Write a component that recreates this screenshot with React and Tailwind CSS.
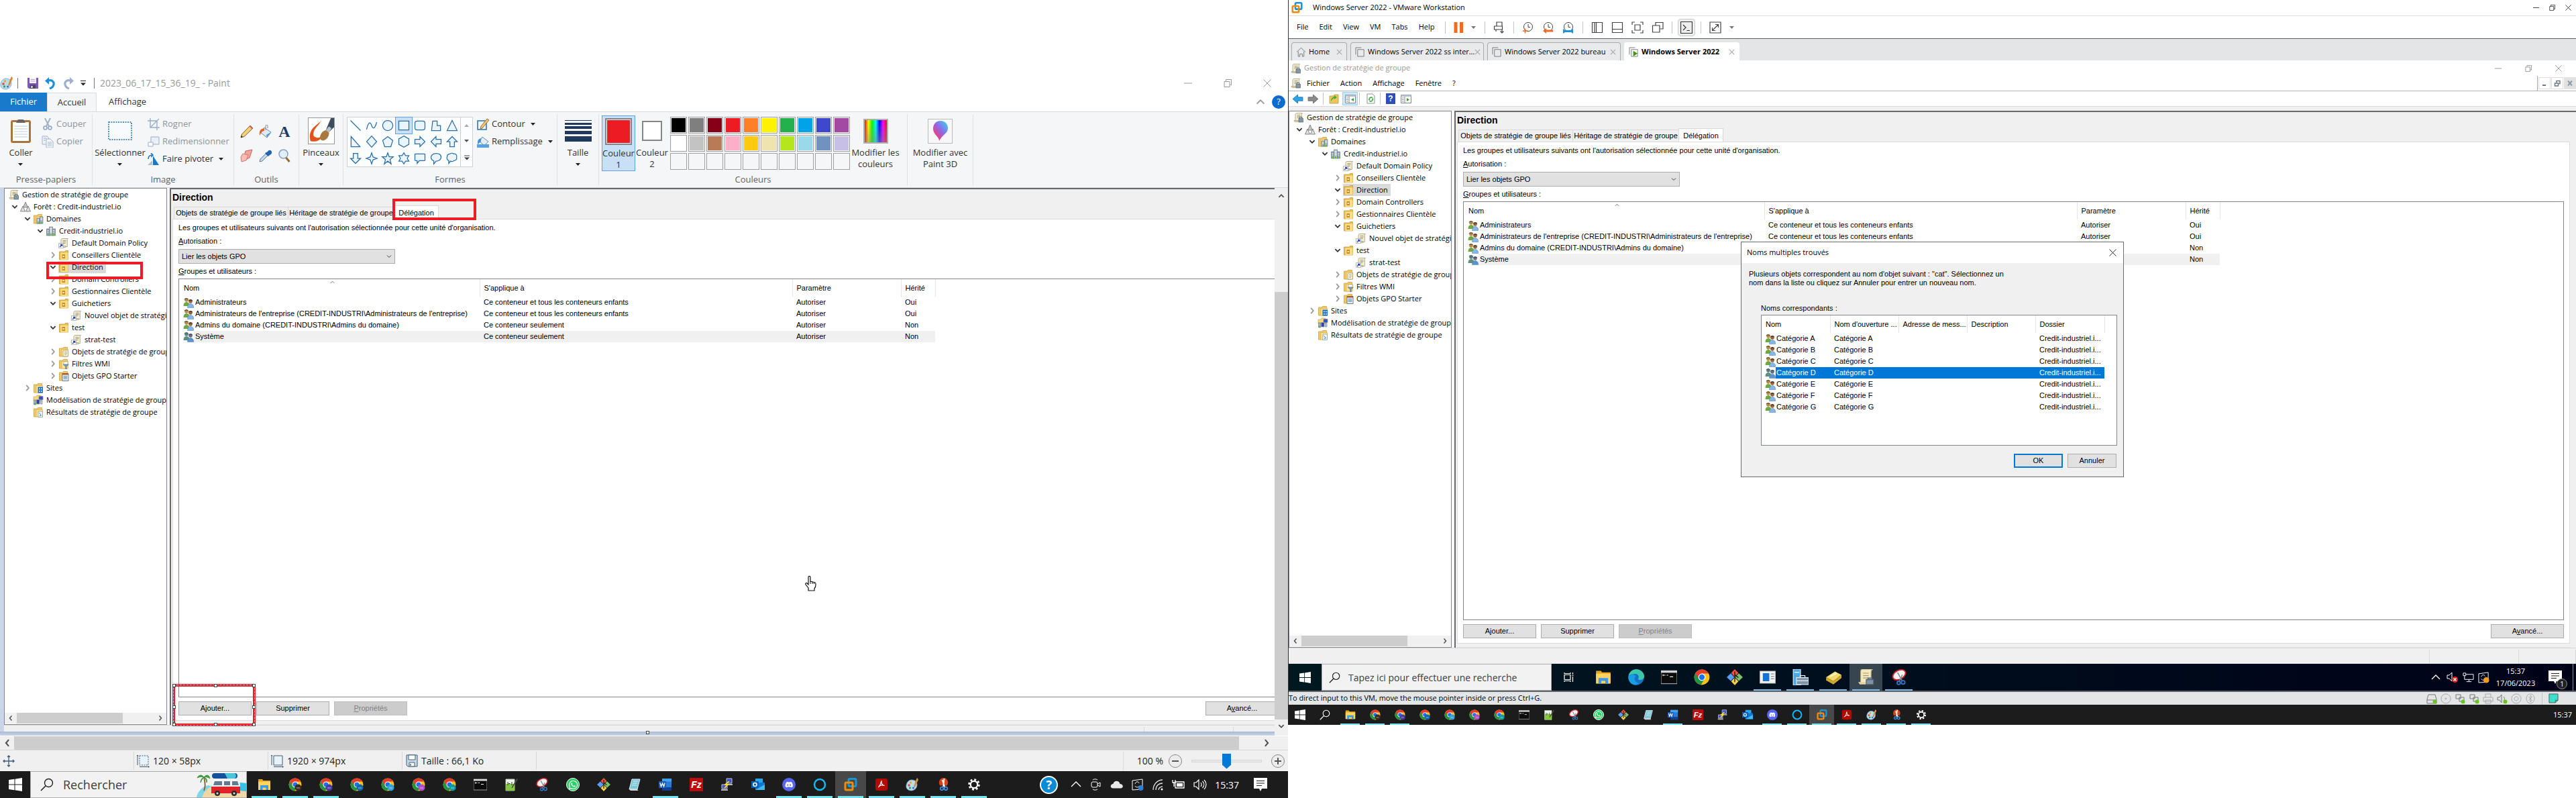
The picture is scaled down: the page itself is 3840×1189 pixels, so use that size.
import React from "react";
import { FaDiscord, FaWhatsapp } from "react-icons/fa";

/* ---------- small building blocks ---------- */

function Svg({ s = 16, w, h, vb = "0 0 16 16", className = "", children }) {
  return (
    <svg width={w || s} height={h || s} viewBox={vb} className={"shrink-0 " + className} aria-hidden="true" fill="none">
      {children}
    </svg>
  );
}

function Chevron({ dir = "down", s = 10, color = "#404040", sw = 1.5 }) {
  const d = { down: "M2 3.5l3 3 3-3", up: "M2 6.5l3-3 3 3", left: "M6.5 1.5L3.5 5l3 3.5", right: "M3.5 1.5L6.5 5l-3 3.5" }[dir];
  return (
    <Svg s={s} vb="0 0 10 10"><path d={d} stroke={color} strokeWidth={sw} /></Svg>
  );
}

function Caret({ color = "#222", up = false }) {
  return (
    <Svg w={8} h={4} vb="0 0 8 4"><path d={up ? "M0 4h7L3.500 0z" : "M0 0h7L3.500 4z"} fill={color} /></Svg>
  );
}

function WinButtons({ color, cell, s = 12 }) {
  return (
    <div className="flex items-center">
      <button aria-label="Réduire" className={"flex justify-center " + cell}><Svg s={s} vb="0 0 12 12"><path d="M0 6h12" stroke={color} /></Svg></button>
      <button aria-label="Restaurer" className={"flex justify-center " + cell}><Svg s={s} vb="0 0 12 12"><path d="M1 3.500h8v8H1zM3.500 3V.5h8v8H9.500" stroke={color} /></Svg></button>
      <button aria-label="Fermer" className={"flex justify-center " + cell}><Svg s={s} vb="0 0 12 12"><path d="M.5.5l11 11M11.500.5l-11 11" stroke={color} /></Svg></button>
    </div>
  );
}

/* ---------- console icons ---------- */

const Scroll = ({ x = 0 }) => (
  <g transform={`translate(${x} 0)`}>
    <path d="M5 1.500h8.500c-1 .6-1.200 1.300-1.200 2.500v9.500H3V4C3 2.500 3.600 1.500 5 1.500z" fill="#f5efd6" stroke="#a39a78" strokeWidth=".8" />
    <path d="M5.500 4.500h5M5.500 6.500h5M5.500 8.500h4" stroke="#8a8262" strokeWidth=".8" />
    <path d="M1 12.500h9v2H2.500C1.500 14.500 1 13.500 1 12.500z" fill="#e2d8ad" stroke="#a39a78" strokeWidth=".7" />
  </g>
);

const FolderBase = () => (
  <>
    <path d="M1.500 3h5l1-1.500h6V15h-12z" fill="#eec965" stroke="#c99a36" strokeWidth=".7" />
    <path d="M5 4.500h9.500V15H5z" fill="#fbe39b" stroke="#d6ab4a" strokeWidth=".6" />
  </>
);

function TreeIcon({ kind }) {
  return (
    <Svg s={16} className="mr-1">
      {kind === "root" && (<><Scroll /><path d="M8 9.500h6.500V15H8z" fill="#8596a6" stroke="#566878" strokeWidth=".7" /><path d="M9.500 9.500V7.500h3.500v2" stroke="#566878" /></>)}
      {kind === "forest" && (<><path d="M8 1l3.500 8h-7z" fill="#c6c6c6" stroke="#6e6e6e" strokeWidth=".8" /><path d="M4 7l3.500 8h-7zM12 7l3.500 8h-7z" fill="#dedede" stroke="#6e6e6e" strokeWidth=".8" /></>)}
      {kind === "domains" && (<><FolderBase /><path d="M6 7h4v8H6zM10.500 5H15v10h-4.500z" fill="#a9b8c4" stroke="#5c6c78" strokeWidth=".6" /><path d="M7 9h2M7 11h2M11.500 7h2.500M11.500 9h2.500" stroke="#fff" /><path d="M8 12.500h1.500V15H8zM12 12.500h1.500V15H12z" fill="#43c229" /></>)}
      {kind === "domain" && (<><path d="M1.500 5h4.500v10H1.500zM10 5h4.500v10H10z" fill="#98a8b4" stroke="#566672" strokeWidth=".6" /><path d="M5.500 2h5v13h-5z" fill="#bac7d1" stroke="#566672" strokeWidth=".6" /><path d="M2.500 7.500h2M2.500 10h2M11 7.500h2M11 10h2M6.500 4.500h3M6.500 7h3M6.500 9.500h3" stroke="#eef3f6" /><path d="M7 12h2v3H7zM2.500 13h1.500v2H2.500zM12 13h1.500v2H12z" fill="#43d020" /></>)}
      {kind === "link" && (<><Scroll x={1} /><path d="M.5 8.500h7v7h-7z" fill="#fff" stroke="#8e8e8e" strokeWidth=".6" /><path d="M2 14l3-3M3 10.500h2.700V13" stroke="#1c3fae" strokeWidth="1.300" /></>)}
      {kind === "ou" && (<><path d="M1.500 3h8l1-1.500h4V15h-13z" fill="#e8bd50" stroke="#c4912c" strokeWidth=".7" /><path d="M3.500 4.500h11V15h-11z" fill="#f8dc8a" /><path d="M5.500 7h4.500v6H5.500z" fill="#c68f24" /><path d="M6.500 9h2.500v2H6.500z" fill="#f6e6b4" /></>)}
      {kind === "gpos" && (<><FolderBase /><path d="M8 6h6.500v9H7V7z" fill="#f8f3df" stroke="#9b9272" strokeWidth=".7" /><path d="M9 8.500h4M9 10.500h4M9 12.500h3" stroke="#9b9272" strokeWidth=".7" /></>)}
      {kind === "wmi" && (<><FolderBase /><path d="M8 5h6v4H8z" fill="#fff" stroke="#999" strokeWidth=".6" /><path d="M7 9h8.500l-3.200 3.200V16h-1.600v-3.800z" fill="#7f9ab0" stroke="#516b80" strokeWidth=".5" /></>)}
      {kind === "starter" && (<><FolderBase /><path d="M6 4.500h9V15.500H6z" fill="#f4f8fc" stroke="#5d6a76" strokeWidth=".9" /><path d="M6 4h9v2.500H6z" fill="#a35a3c" /><path d="M7.500 8.500h6M7.500 10.500h6M7.500 12.500h6" stroke="#4a83c0" /></>)}
      {kind === "sites" && (<><FolderBase /><path d="M7.500 6.500H15V15.500H7.500z" fill="#1c6fc9" /><path d="M9 8.500h1.800v1.800H9zM12 8.500h1.800v1.800H12zM9 12h1.800v1.800H9zM12 12h1.800v1.800H12z" fill="#d9ecff" /></>)}
      {kind === "model" && (<><path d="M1 3h4l1-2h6v8H1z" fill="#f2d883" stroke="#c99a36" strokeWidth=".6" /><path d="M9 2.500h6v5H9z" fill="#3151c4" stroke="#888" strokeWidth=".8" /><path d="M1.500 8h3v7h-3z" fill="#a6b4be" stroke="#5c6c78" strokeWidth=".6" /><path d="M5.500 7.500h4.500V14H5.500z" fill="#2445b8" stroke="#999" strokeWidth=".8" /><path d="M11.500 8.500H14V14h-2.500z" fill="#c0cad2" stroke="#68757f" strokeWidth=".6" /><path d="M2 12.500h2v2H2z" fill="#43c229" /></>)}
      {kind === "results" && (<><FolderBase /><path d="M8 7h6.500v8.500H8z" fill="#f5fafd" stroke="#7d94a5" strokeWidth=".7" /><path d="M9.500 9l2 2.500-1 2 2.500-1" stroke="#2b85c9" /></>)}
    </Svg>
  );
}

function Users({ dim = false }) {
  return (
    <Svg s={16}>
      <circle cx="5" cy="4" r="2.800" fill={dim ? "#5d7c84" : "#b98a4a"} />
      <path d="M1.500 3.500C2 .5 7.500.3 8 3.500 6.500 2 3.500 2 1.500 3.500z" fill={dim ? "#3d6470" : "#57431f"} />
      <path d="M.5 13c0-4 1.500-6 4.500-6s4.500 2 4.500 6z" fill={dim ? "#5c9180" : "#6da840"} />
      <circle cx="11" cy="6" r="2.800" fill={dim ? "#6a6f7c" : "#96623c"} />
      <path d="M8 5.500C8.500 2.500 14 2.500 14.200 5.800 12.500 4 10 4 8 5.500z" fill={dim ? "#2d4560" : "#2e2219"} />
      <path d="M6.500 15.500c0-4 1.500-6 4.500-6s4.700 2 4.700 6z" fill={dim ? "#5b93cf" : "#86b6e8"} stroke="#4c7dac" strokeWidth=".5" />
    </Svg>
  );
}

/* ---------- group policy console ---------- */

const TREE = [
  [0, "", "root", "Gestion de stratégie de groupe"],
  [0, "down", "forest", "Forêt : Credit-industriel.io"],
  [1, "down", "domains", "Domaines"],
  [2, "down", "domain", "Credit-industriel.io"],
  [3, "", "link", "Default Domain Policy"],
  [3, "right", "ou", "Conseillers Clientèle"],
  [3, "down", "ou", "Direction"],
  [3, "right", "ou", "Domain Controllers"],
  [3, "right", "ou", "Gestionnaires Clientèle"],
  [3, "down", "ou", "Guichetiers"],
  [4, "", "link", "Nouvel objet de stratégie"],
  [3, "down", "ou", "test"],
  [4, "", "link", "strat-test"],
  [3, "right", "gpos", "Objets de stratégie de groupe"],
  [3, "right", "wmi", "Filtres WMI"],
  [3, "right", "starter", "Objets GPO Starter"],
  [1, "right", "sites", "Sites"],
  [1, "", "model", "Modélisation de stratégie de groupe"],
  [1, "", "results", "Résultats de stratégie de groupe"],
];
const INDENT = ["pl-1.5", "pl-[25px]", "pl-11", "pl-[63px]", "pl-[82px]"];

function ConsoleTree() {
  return (
    <nav aria-label="Arborescence" className="flex w-[243px] shrink-0 flex-col overflow-hidden border border-[#828790] bg-white">
      <ul className="min-h-0 flex-1 overflow-hidden font-['Open_Sans',sans-serif] text-[11px] text-black">
        {TREE.map(([depth, state, icon, label]) => (
          <li key={label} className={"flex h-[18px] items-center whitespace-nowrap " + INDENT[depth]}>
            {icon !== "root" && (
              <span className="flex w-[17px] shrink-0 justify-center">
                {state && <Chevron dir={state} s={12} color={state === "down" ? "#303030" : "#9a9a9a"} />}
              </span>
            )}
            <span className={"flex items-center pr-1 " + (label === "Direction" ? "bg-[#d9d9d9]" : "")}>
              <TreeIcon kind={icon} />
              <span className="leading-[18px]">{label}</span>
            </span>
          </li>
        ))}
      </ul>
      <div className="mb-px flex h-4 shrink-0 items-center bg-[#f0f0f0]">
        <span className="flex w-[18px] justify-center"><Chevron dir="left" color="#505050" /></span>
        <span className="h-full w-[158px] bg-[#cdcdcd]" />
        <span className="ml-auto flex w-[18px] justify-center"><Chevron dir="right" color="#505050" /></span>
      </div>
    </nav>
  );
}

function PushButton({ children, disabled = false, primary = false, w = "w-[109px]" }) {
  return (
    <button
      disabled={disabled}
      className={
        "h-[21px] text-[11px] leading-none " + w +
        (disabled ? " border border-[#bfbfbf] bg-[#cccccc] text-[#838383]" : primary ? " border-2 border-[#0078d7] bg-[#e1e1e1] text-black" : " border border-[#adadad] bg-[#e1e1e1] text-black")
      }
    >
      {children}
    </button>
  );
}

const MEMBERS = [
  ["Administrateurs", "Ce conteneur et tous les conteneurs enfants", "Autoriser", "Oui"],
  ["Administrateurs de l'entreprise (CREDIT-INDUSTRI\\Administrateurs de l'entreprise)", "Ce conteneur et tous les conteneurs enfants", "Autoriser", "Oui"],
  ["Admins du domaine (CREDIT-INDUSTRI\\Admins du domaine)", "Ce conteneur seulement", "Autoriser", "Non"],
  ["Système", "Ce conteneur seulement", "Autoriser", "Non"],
];

function DetailsPane({ id }) {
  return (
    <section className="ml-1 flex min-w-0 flex-1 flex-col border-t-2 border-l-2 border-[#696969] bg-[#f0f0f0] pr-[9px] pl-[2px] font-['Liberation_Sans',sans-serif] text-[11px] text-black">
      <h2 className="h-6 text-[14px] leading-6 font-bold">Direction</h2>
      <div role="tablist" className="flex h-5 items-end pl-[2px]">
        <button role="tab" className="h-[18px] w-[171px] border border-b-0 border-[#d9d9d9] whitespace-nowrap">Objets de stratégie de groupe liés</button>
        <button role="tab" className="h-[18px] w-[157px] border border-x-0 border-b-0 border-[#d9d9d9] whitespace-nowrap">Héritage de stratégie de groupe</button>
        <button role="tab" aria-selected="true" className="-mb-px h-[21px] w-[67px] border border-b-0 border-[#d9d9d9] bg-white">Délégation</button>
      </div>
      <div className="flex min-h-0 flex-1 flex-col border border-[#dcdcdc] bg-white px-2 pt-[2px] pb-[7px]">
        <p className="h-5 leading-5">Les groupes et utilisateurs suivants ont l'autorisation sélectionnée pour cette unité d'organisation.</p>
        <label htmlFor={id} className="h-[22px] leading-5"><u>A</u>utorisation :</label>
        <div className="relative w-[323px]">
          <select id={id} className="block h-[22px] w-full appearance-none border border-[#adadad] bg-[#e1e1e1] px-1">
            <option>Lier les objets GPO</option>
          </select>
          <span className="pointer-events-none absolute top-1.5 right-1"><Chevron s={10} sw={1} /></span>
        </div>
        <p className="h-[22px] leading-[22px]"><u>G</u>roupes et utilisateurs :</p>
        <div className="min-h-0 flex-1 border border-[#828790]">
          <table className="w-[1127px] table-fixed border-collapse text-left">
            <colgroup><col className="w-[448px]" /><col className="w-[466px]" /><col className="w-[162px]" /><col className="w-[51px]" /></colgroup>
            <thead>
              <tr className="h-[26px]">
                <th className="relative border-r border-[#e5e5e5] pl-[7px] font-normal">Nom<span className="absolute top-0 left-1/2"><Chevron dir="up" s={9} sw={1} color="#666" /></span></th>
                <th className="border-r border-[#e5e5e5] pl-[6px] font-normal">S'applique à</th>
                <th className="border-r border-[#e5e5e5] pl-[6px] font-normal">Paramètre</th>
                <th className="border-r border-[#e5e5e5] pl-[6px] font-normal">Hérité</th>
              </tr>
            </thead>
            <tbody>
              {MEMBERS.map(([name, scope, right, inherited], i) => (
                <tr key={name} className={"h-[17px] whitespace-nowrap " + (i === 3 ? "bg-[#f0f0f0]" : "")}>
                  <td className="p-0"><span className="flex items-center bg-white pl-[6px]"><Users dim={i === 3} /><span className={"flex-1 pl-0.5 leading-[17px] " + (i === 3 ? "bg-[#f0f0f0]" : "")}>{name}</span></span></td>
                  <td className="p-0 pl-[6px]">{scope}</td>
                  <td className="p-0 pl-[6px]">{right}</td>
                  <td className="p-0 pl-[6px]">{inherited}</td>
                </tr>
              ))}
            </tbody>
          </table>
        </div>
        <div className="mt-1.5 flex gap-[7px]">
          <PushButton>Ajouter...</PushButton>
          <PushButton>Supprimer</PushButton>
          <PushButton disabled><u>P</u>ropriétés</PushButton>
          <span className="ml-auto"><PushButton>A<u>v</u>ancé...</PushButton></span>
        </div>
      </div>
      <div className="h-[6px] shrink-0 border-b border-[#e4e4e4]" />
    </section>
  );
}

function ConsoleBody({ id }) {
  return (
    <div className="flex min-h-0 flex-1 bg-[#f7f7f7]">
      <ConsoleTree />
      <DetailsPane id={id} />
    </div>
  );
}

function ConsoleStatus({ h }) {
  return (
    <div className={"flex shrink-0 justify-end border-t border-[#d7d7d7] bg-[#f0f0f0] pt-[2px] " + h}>
      <span className="w-[133px] border-l border-[#d7d7d7]" />
      <span className="w-[86px] border-x border-[#d7d7d7]" />
    </div>
  );
}

/* ---------- taskbar icons ---------- */

const CHROME = { chromeA: "#3b2a22", chromeB: "#4b3aa6", chromeC: "#1266ad", chromeD: "#31a3dc", chromeE: "#b050c4", chromeF: "#119c9c", chrome: "" };

function AppIcon({ name, s = 20 }) {
  if (name === "discord")
    return <span className="grid place-items-center rounded-full bg-[#5865f2]" style={{ width: s, height: s }}><FaDiscord size={s * 0.62} color="#fff" /></span>;
  if (name === "whatsapp")
    return <span className="grid place-items-center rounded-full border border-white bg-[#25d366]" style={{ width: s, height: s }}><FaWhatsapp size={s * 0.75} color="#fff" /></span>;
  const badge = CHROME[name];
  return (
    <Svg s={s} vb="0 0 20 20">
      {badge !== undefined && (<>
        <circle cx="10" cy="10" r="9.500" fill="#fbc116" />
        <path d="M10 .5a9.500 9.500 0 0 0-8.200 4.700L6 12.500 10 5.500h8.300A9.500 9.500 0 0 0 10 .5z" fill="#e33b2e" />
        <path d="M1.800 5.200A9.500 9.500 0 0 0 9 19.400l4.200-7.100-6.800.2z" fill="#229342" />
        <circle cx="10" cy="10" r="4.500" fill="#fff" /><circle cx="10" cy="10" r="3.500" fill="#1a73e8" />
        {badge && <><circle cx="14.500" cy="14.500" r="5" fill={badge} /><path d="M12 15h5" stroke="#fff" strokeOpacity=".6" /></>}
      </>)}
      {name === "explorer" && (<><path d="M1 2h6l1.500 2H19v13H1z" fill="#e8a317" /><path d="M1 5.500h18V18H1z" fill="#ffd45e" /><path d="M4 18v-7h12v7h-3.500v-3.500h-5V18z" fill="#3a9be8" /></>)}
      {name === "cmd" && (<><path d="M0 2h20v16H0z" fill="#0b0b0b" stroke="#9a9a9a" /><path d="M0 2h20v2.500H0z" fill="#d8d8d8" /><path d="M2.500 7.500h3M7 7.500h2M11 9.500h4M2.500 6.500v2" stroke="#eee" /></>)}
      {name === "npp" && (<><path d="M2 2h13v17H2z" fill="#f2f7ee" stroke="#b5c7a6" /><path d="M2 9h13v10H2z" fill="#86c840" /><path d="M5 6v5M6 8.500h2.500M11 6v5" stroke="#333" /><path d="M18.500 1L11 13.500l-.5 2 1.700-1L20 2z" fill="#4a4a4a" /></>)}
      {name === "capture" && (<><ellipse cx="10" cy="7" rx="8.500" ry="5.500" transform="rotate(-28 10 7)" fill="#f5f5f5" stroke="#d1242b" strokeWidth="1.600" /><path d="M8 4l6 11M14 7l-4 9" stroke="#7d8a96" strokeWidth="1.300" /><circle cx="15" cy="16.500" r="2.200" stroke="#2f76c6" strokeWidth="1.500" /><circle cx="9.500" cy="17" r="2" stroke="#2f76c6" strokeWidth="1.500" /></>)}
      {name === "git" && (<><path d="M10 0l4.500 4.700L10 9.500 5.500 4.700z" fill="#f0503c" /><path d="M15 5.200l5 4.800-5 4.800-4.500-4.800z" fill="#7cc06a" /><path d="M10 10.500l4.500 4.800L10 20l-4.500-4.700z" fill="#f6cf4a" /><path d="M5 5.200L9.500 10 5 14.800 0 10z" fill="#5b9df0" /><path d="M10 3v13M10 7l4.500 3.500" stroke="#222" strokeWidth="1.200" /></>)}
      {name === "notes" && (<><path d="M6 2h12l-4 15H2z" fill="#7fc6d8" stroke="#dff4f8" /><path d="M2 17h12l1.500 2H4z" fill="#d4d8da" /><path d="M8 5h7M7 8h7M6 11h7" stroke="#cfeef5" /></>)}
      {name === "word" && (<><path d="M5 1h14v18H5z" fill="#2b7cd3" /><path d="M5 1h14v4.500H5z" fill="#41a5ee" /><path d="M5 14h14v5H5z" fill="#103f91" /><path d="M0 5h11v10H0z" fill="#185abd" /><path d="M2 7.500l1.500 5.500 2-5 2 5L9 7.500" stroke="#fff" strokeWidth="1.300" /></>)}
      {name === "outlook" && (<><path d="M6 1h11v8H6z" fill="#28a8ea" /><path d="M6 7h14v11H6z" fill="#0f78d4" /><path d="M6 18l14-8v8z" fill="#50d9ff" opacity=".7" /><path d="M0 5h11v10H0z" fill="#0a5fb4" /><circle cx="5.500" cy="10" r="2.500" stroke="#fff" strokeWidth="1.500" /></>)}
      {name === "filezilla" && (<><path d="M0 0h20v20H0z" fill="#bf0a0a" /><text x="10" y="15" textAnchor="middle" fontSize="14" fontWeight="700" fontStyle="italic" fontFamily="Liberation Sans" fill="#fff">Fz</text></>)}
      {name === "putty" && (<><path d="M9 1h8v7H9zM2 10h8v6H2z" fill="#3c50d8" stroke="#c8c8c8" /><path d="M8 9h10v2H8zM1 17h10v2H1z" fill="#b8b8b8" /><path d="M13 5l-6 5h4l-5 5" stroke="#ffe81a" strokeWidth="1.600" /></>)}
      {name === "cortana" && <circle cx="10" cy="10" r="8" stroke="#12b9f5" strokeWidth="2.500" />}
      {name === "vmware" && (<><rect x="7" y="1.500" width="11" height="11" rx="1.500" stroke="#1a94d2" strokeWidth="3" /><rect x="2" y="7" width="11" height="11" rx="1.500" stroke="#f38b00" strokeWidth="3" /></>)}
      {name === "acrobat" && (<><rect x="1" y="1" width="18" height="18" rx="3" fill="#b30b00" /><path d="M10 4.500c-1 0 .2 5-4.500 9.500 1-3 5-4 9-2.500-3-.5-5-3-4.500-7z" stroke="#fff" strokeWidth="1.200" /></>)}
      {name === "paint" && (<><path d="M9 3c5 0 8 3 8 7.500S13 19 8.500 19 0 16 1 11s4-8 8-8z" fill="#b8dcf0" stroke="#6da2c4" strokeWidth=".8" /><circle cx="5" cy="11" r="1.800" fill="#e24b3a" /><circle cx="7.500" cy="7" r="1.700" fill="#f2a526" /><circle cx="6.500" cy="15" r="1.700" fill="#3aa64a" /><circle cx="11.500" cy="15" r="1.600" fill="#3e6ed0" /><path d="M17 0c2 1 2.500 3 1 5l-4 9-2-1 3-9z" fill="#d98a3a" /></>)}
      {name === "snipping" && (<><path d="M10 0a7 7 0 0 0-4 12l4-2 5 2A7 7 0 0 0 10 0z" fill="#d8401c" /><path d="M11.500 1L10 13M8.500 3l4 11" stroke="#f0f0f0" strokeWidth="2" /><circle cx="8" cy="16" r="2.300" stroke="#3c8ad8" strokeWidth="1.700" /><circle cx="14" cy="16" r="2.300" stroke="#3c8ad8" strokeWidth="1.700" /></>)}
      {name === "settings" && (<><circle cx="10" cy="10" r="5.200" stroke="#fff" strokeWidth="2.200" /><circle cx="10" cy="10" r="7.500" stroke="#fff" strokeWidth="2.500" strokeDasharray="2.900 2.990" /></>)}
      {name === "edge" && (<><circle cx="10" cy="10" r="9.800" fill="#1471c9" /><path d="M.5 8C2 3 6-.2 11 .3c5 .5 9 4.200 9 8.700 0 3-2.500 4.500-5.500 4.500-2 0-2.500-1-1.500-2.500C14 8 11 5.500 7.500 6 4.500 6.300 2 7 .5 8z" fill="#3bc8a8" /><path d="M.3 9C3 6 8 6 9.500 9c-3 2-1.500 7.500 4 8.500-2 2-5 2.500-7.500 1.500C2 17.500 0 13.500.3 9z" fill="#1b9de2" /></>)}
      {name === "window" && (<><path d="M.5 2.500h19v15H.5z" fill="#f4f4f4" stroke="#b5b5b5" /><path d="M4 5h8v10H4z" fill="#1474d4" /><path d="M14 6h4M14 9h4M14 12h4" stroke="#888" /></>)}
      {name === "server" && (<><path d="M1 0h9v20H1z" fill="#48a8e8" stroke="#d8eefb" /><path d="M2.500 4h6" stroke="#fff" /><path d="M5 10.500h15V19H5z" fill="#7c93a8" stroke="#dfe8ef" /><path d="M9.500 10V8h6v2M5 14.500h15" stroke="#e8eef2" /></>)}
      {name === "gold" && (<><path d="M1 10L12 3l8 4-10 8z" fill="#f4dc6c" /><path d="M1 10l9 5v4l-9-5zM10 15l10-8v4l-10 8z" fill="#cfa92e" /><path d="M6 9l8-4" stroke="#fff6c4" strokeWidth="2" /></>)}
      {name === "policy" && (<><path d="M5 0h13c-2 1-2 3-2 4v13H3V4c0-3 1-4 2-4z" fill="#f3e9c0" stroke="#b5a876" /><path d="M6 5h7M6 8h7M6 11h6" stroke="#a89a68" /><path d="M0 16h12v3H2z" fill="#e4d69c" /><path d="M10 13h9v6h-9zM12 13v-2h5v2" fill="#7f93a6" stroke="#50616f" /></>)}
    </Svg>
  );
}

const HOST_APPS = ["explorer", "chromeA", "chromeB", "chromeC", "chromeD", "chromeE", "chromeF", "cmd", "npp", "capture", "whatsapp", "git", "notes", "word", "filezilla", "putty", "outlook", "discord", "cortana", "vmware", "acrobat", "paint", "snipping", "settings"];
const RUNNING = new Set(["explorer", "chromeA", "chromeB", "word", "discord", "cortana", "vmware", "acrobat", "paint", "snipping", "settings"]);

function TaskButton({ name, s, w, bar, running, active }) {
  return (
    <button aria-label={name} className={"relative grid h-full shrink-0 place-items-center " + w + (active ? " bg-[#484848]" : "")}>
      <AppIcon name={name} s={s} />
      {running && <span className={"absolute inset-x-1 bottom-0 " + bar} />}
    </button>
  );
}

const WinLogo = ({ s = 20 }) => (
  <Svg s={s} vb="0 0 20 20"><path d="M0 3l8.500-1.200v7.700H0zM9.500 1.700L20 0v9.500H9.500zM0 10.500h8.500v7.700L0 17zM9.500 10.500H20V20L9.500 18.300z" fill="#fff" /></Svg>
);
const Loupe = ({ s = 20, color = "#222" }) => (
  <Svg s={s} vb="0 0 20 20"><circle cx="12.500" cy="7.500" r="6" stroke={color} strokeWidth="1.400" /><path d="M8 12L1 19" stroke={color} strokeWidth="1.600" /></Svg>
);

function Notice({ badge }) {
  return (
    <span className="relative">
      <Svg s={20} vb="0 0 20 20"><path d="M0 0h20v16h-8l-2 4-2-4H0z" fill="#fff" /><path d="M4 4.500h12M4 8h12M4 11.500h8" stroke="#222" strokeWidth="1.200" /></Svg>
      {badge && <span className="absolute -right-2 -bottom-2 grid size-4 place-items-center rounded-full border border-[#888] bg-[#222] text-[10px] text-white">1</span>}
    </span>
  );
}

/* ---------- paint ---------- */

function PaintTitle() {
  return (
    <header className="flex h-[29px] shrink-0 items-center">
      <AppIcon name="paint" s={20} />
      <span className="ml-1.5 h-4 w-px bg-[#777]" />
      <button aria-label="Enregistrer" className="ml-[14px]"><Svg s={16}><path d="M0 0h16v16H2l-2-2z" fill="#7d57b8" /><path d="M3 0h10v8H3z" fill="#f6f4fa" /><path d="M4.500 2.500h7M4.500 5h7" stroke="#b8a8d0" /><path d="M4 10.500h8V16H4z" fill="#4a4360" /><path d="M5.500 12h2v3h-2z" fill="#fff" /></Svg></button>
      <button aria-label="Annuler" className="ml-[9px]"><Svg s={18} vb="0 0 18 18"><path d="M5 5.500C11 3 15 7 14 11c-.5 3-3 5-6 6" stroke="#1d8fdc" strokeWidth="3.200" /><path d="M1 5.500L7 0v11z" fill="#1d8fdc" /></Svg></button>
      <button aria-label="Rétablir" className="ml-[9px]"><Svg s={18} vb="0 0 18 18"><path d="M13 5.500C7 3 3 7 4 11c.5 3 3 5 6 6" stroke="#9fb0ca" strokeWidth="3.200" /><path d="M17 5.500L11 0v11z" fill="#9fb0ca" /></Svg></button>
      <button aria-label="Personnaliser" className="ml-[9px]"><Svg w={8} h={8} vb="0 0 8 8"><path d="M0 .5h8" stroke="#222" /><path d="M0 3.500h8l-4 4z" fill="#222" /></Svg></button>
      <span className="mr-2 ml-3 h-4 w-px bg-[#777]" />
      <h1 className="font-['Open_Sans',sans-serif] text-[14px] text-[#999]">2023_06_17_15_36_19_ - Paint</h1>
      <div className="mr-0.5 ml-auto"><WinButtons color="#999" cell="w-[59px]" /></div>
    </header>
  );
}

function Group({ label, w, children }) {
  return (
    <div className={"flex shrink-0 flex-col border-r border-[#dfe2e5] " + w}>
      <div className="flex flex-1 pt-0.5">{children}</div>
      <div className="h-[17px] text-center leading-[17px] text-[#5f6468]">{label}</div>
    </div>
  );
}

function BigButton({ icon, lines, arrow, className }) {
  return (
    <button className={"flex h-[83px] shrink-0 flex-col items-center " + className}>
      <span className="flex h-[46px] items-center">{icon}</span>
      <span className="h-[18px] leading-[18px] whitespace-nowrap">{lines[0]}</span>
      <span className="flex h-[17px] items-center leading-[17px] whitespace-nowrap">{arrow ? <Caret /> : lines[1]}</span>
    </button>
  );
}

function SmallButton({ icon, label, disabled, arrow }) {
  return (
    <button disabled={disabled} className={"flex h-[26px] items-center gap-1 whitespace-nowrap " + (disabled ? "text-[#8f959b]" : "")}>
      {icon}
      {label}
      {arrow && <span className="ml-1"><Caret /></span>}
    </button>
  );
}

const SHAPES = [
  "M3 3l18 18", "M3 19C6 5 10 5 12 12s6 6 9-6", "M12 3a9 9 0 1 0 .01 0z", "M3 4h18v16H3z", "M7 4h10q4 0 4 4v8q0 4-4 4H7q-4 0-4-4V8q0-4 4-4z", "M6 4h8v8h6v9H4z", "M12 3l9 18H3z",
  "M4 3v18h16z", "M12 2l9 10-9 10-9-10z", "M12 3l9 7-3.500 11h-11L3 10z", "M12 2l9 5v10l-9 5-9-5V7z", "M3 8h9V3l9 9-9 9v-5H3z", "M21 8h-9V3l-9 9 9 9v-5h9z", "M8 21v-9H3l9-9 9 9h-5v9z",
  "M8 3v9H3l9 9 9-9h-5V3z", "M12 2l2.500 7.500L22 12l-7.500 2.500L12 22l-2.500-7.500L2 12l7.500-2.500z", "M12 2l2.500 7H22l-6 5 2.200 8-6.200-5-6.200 5L8 14 2 9h7.500z", "M12 2l3 5h6l-3 5 3 5h-6l-3 5-3-5H3l3-5-3-5h6z", "M4 4h16q1 0 1 1v10q0 1-1 1h-9l-4 5v-5H4q-1 0-1-1V5q0-1 1-1z", "M12 3c6 0 9 3 9 7s-4 7-9 7l-4 5v-5.500C4 15 3 13 3 10c0-4 4-7 9-7z", "M8 4c3-2 6-1 7 0 4-1 6 3 5 6 1 4-2 6-5 6-2 2-4 2-6 1l-3 4v-5c-3-1-4-4-3-7 0-3 2-5 5-5z",
];

const PALETTE = [
  ["#000000", "#7f7f7f", "#880015", "#ed1c24", "#ff7f27", "#fff200", "#22b14c", "#00a2e8", "#3f48cc", "#a349a4"],
  ["#ffffff", "#c3c3c3", "#b97a57", "#ffaec9", "#ffc90e", "#efe4b0", "#b5e61d", "#99d9ea", "#7092be", "#c8bfe7"],
  ["#f5f6f7", "#f5f6f7", "#f5f6f7", "#f5f6f7", "#f5f6f7", "#f5f6f7", "#f5f6f7", "#f5f6f7", "#f5f6f7", "#f5f6f7"],
];

function Tool({ kind }) {
  return (
    <button aria-label={kind} className="grid h-9 w-7 place-items-center">
      {kind === "Texte" ? (
        <span className="font-['Liberation_Serif',serif] text-[24px] leading-[28px] font-bold text-[#1f3a68]">A</span>
      ) : (
        <Svg s={20} vb="0 0 20 20">
          {kind === "Crayon" && (<><path d="M1 19l1.500-5L15 1l4 4L6 17.500z" fill="#f4d27a" stroke="#7c5b2a" /><path d="M13.500 2.500L15 1l4 4-1.500 1.500z" fill="#e0685c" /><path d="M1 19l1-3 2 2z" fill="#222" /></>)}
          {kind === "Remplir" && (<><path d="M8 4l10 7-6 8-9-7z" fill="#dceaf5" stroke="#6d8ba8" /><path d="M10 8V1c0-1 3-1 3 0v4" stroke="#888" /><path d="M8 5C2 6 0 9 1 16c2-3 2-6 7-7z" fill="#e8642e" /><path d="M12 19l6-8-7 4z" fill="#5c94cc" /></>)}
          {kind === "Gomme" && (<><path d="M8 3l10-2-4 12-10 5z" fill="#f0a49c" stroke="#c9665c" /><path d="M1 12l3-5 8 2-3 8-7 2z" fill="#f6bdb6" stroke="#d07a70" /></>)}
          {kind === "Pipette" && (<><path d="M1 19l1-4 8-8 3 3-8 8z" fill="#c3d7ea" stroke="#5f7f9f" /><path d="M9 6l5 5 2-2c3-1 4-4 2.500-6S14 1.500 13 4z" fill="#1f66ac" /></>)}
          {kind === "Loupe" && (<><circle cx="8.500" cy="7.500" r="6.500" fill="#e2eefa" stroke="#8aa4bf" strokeWidth="1.500" /><path d="M12.500 13l5 6" stroke="#9a6a33" strokeWidth="3" /></>)}
        </Svg>
      )}
    </button>
  );
}

function PaintRibbon() {
  return (
    <>
      <div className="flex h-7 shrink-0 items-center font-['Open_Sans',sans-serif] text-[13px] text-[#333]">
        <button className="h-full w-[70px] bg-[#1979ca] text-white">Fichier</button>
        <button className="-mb-px h-[29px] w-[74px] border border-b-0 border-[#dadbdc] bg-[#f5f6f7]">Accueil</button>
        <button className="px-[18px]">Affichage</button>
        <button aria-label="Réduire le ruban" className="ml-auto"><Chevron dir="up" s={18} color="#999" sw={1} /></button>
        <button aria-label="Aide" className="mr-1 ml-2 grid size-5 place-items-center rounded-full bg-[#0a6cce] text-white">?</button>
      </div>
      <div className="flex h-[114px] shrink-0 border-y border-[#dadbdc] bg-[#f5f6f7] py-[3px] font-['Open_Sans',sans-serif] text-[13px] text-[#333]">
        <Group label="Presse-papiers" w="w-[138px]">
          <BigButton className="w-[62px]" lines={["Coller"]} arrow icon={<Svg w={34} h={38} vb="0 0 34 38"><rect x="2" y="3" width="30" height="34" rx="3" fill="#a9743a" /><path d="M5 6h24v28H5z" fill="#fff" /><path d="M7 12h20M7 16h20M7 20h20M7 24h20M7 28h20" stroke="#b9cfe2" /><path d="M10 7l3-5h8l3 5z" fill="#666" /></Svg>} />
          <div>
            <SmallButton disabled label="Couper" icon={<Svg s={18} vb="0 0 18 18"><path d="M5 0l6 12M13 0L7 12" stroke="#a0b0c6" strokeWidth="2" /><circle cx="5.500" cy="14.500" r="2.500" stroke="#8fa3bf" strokeWidth="1.500" /><circle cx="12.500" cy="14.500" r="2.500" stroke="#8fa3bf" strokeWidth="1.500" /></Svg>} />
            <SmallButton disabled label="Copier" icon={<Svg s={18} vb="0 0 18 18"><path d="M1 1h7l3 3v9H1z" fill="#eef3fa" stroke="#9fb2d0" /><path d="M7 5h6l4 4v9H7z" fill="#f3f7fc" stroke="#9fb2d0" /><path d="M9 10h6M9 12.500h6M9 15h6M3 4h4M3 7h3" stroke="#9fb2d0" /></Svg>} />
          </div>
        </Group>
        <Group label="Image" w="w-[211px]">
          <BigButton className="mx-1 w-[74px]" lines={["Sélectionner"]} arrow icon={<Svg w={36} h={28} vb="0 0 36 28"><path d="M1 1h34v26H1z" fill="#f8fbfe" stroke="#1a6fb5" strokeWidth="1.500" strokeDasharray="2 1.500" /></Svg>} />
          <div>
            <SmallButton disabled label="Rogner" icon={<Svg s={18} vb="0 0 18 18"><path d="M4 0v14h14M0 4h14v14M4 14L17 1" stroke="#9aacc6" strokeWidth="1.400" /></Svg>} />
            <SmallButton disabled label="Redimensionner" icon={<Svg s={18} vb="0 0 18 18"><path d="M5 2h12v11H5z" fill="#e9f0f8" stroke="#9aacc6" /><path d="M1 10h7v6H1z" fill="#fff" stroke="#9aacc6" /></Svg>} />
            <SmallButton arrow label="Faire pivoter" icon={<Svg s={18} vb="0 0 18 18"><path d="M8 4v14h9z" fill="#1c78be" /><path d="M0 18h7v-7z" fill="#b8bfc6" /><path d="M1 9c0-4 2-6 6-6M5 0l3 3-3 3" stroke="#1c78be" strokeWidth="1.500" /></Svg>} />
          </div>
        </Group>
        <Group label="Outils" w="w-[97px]">
          <div className="grid grid-cols-3 content-start pt-1.5 pl-[5px]">
            {["Crayon", "Remplir", "Texte", "Gomme", "Pipette", "Loupe"].map((k) => <Tool key={k} kind={k} />)}
          </div>
        </Group>
        <Group label="" w="w-[66px]">
          <BigButton className="w-full" lines={["Pinceaux"]} arrow icon={<Svg s={40} vb="0 0 40 40" className="border border-[#999] bg-white"><path d="M3 36C-2 18 12 12 20 4 14 14 6 18 8 28c4 4 8 4 14-1-3 8-10 11-19 9z" fill="#e4521b" /><ellipse cx="25" cy="27" rx="6" ry="9" transform="rotate(35 25 27)" fill="#a97a3d" /><path d="M27 19l8-19h5v14l-8 8z" fill="#3c4c5c" /><path d="M27 19l5-6 4 3-4 7z" fill="#b8c0c8" /></Svg>} />
        </Group>
        <Group label="Formes" w="w-[319px]">
          <div className="mt-0.5 ml-[5px] flex h-[75px] border border-[#cdd1d5] bg-[#fcfdfe]">
            <div className="grid grid-cols-7">
              {SHAPES.map((d, i) => (
                <button key={d} aria-label={"Forme " + (i + 1)} className={"grid size-6 place-items-center " + (i === 3 ? "bg-[#c9dff5] ring-1 ring-[#62a2e4]" : "")}>
                  <Svg s={20} vb="0 0 24 24"><path d={d} stroke="#2a6ea6" strokeWidth="1.500" fill={i > 1 ? "#eaf4fc" : "none"} /></Svg>
                </button>
              ))}
            </div>
            <div className="flex w-[18px] flex-col items-center justify-around border-l border-[#cdd1d5]">
              <Caret up color="#aaa" /><Caret color="#555" />
              <Svg w={8} h={8} vb="0 0 8 8"><path d="M0 1h8" stroke="#444" /><path d="M0 3.500h8l-4 4z" fill="#444" /></Svg>
            </div>
          </div>
          <div className="ml-1.5">
            <SmallButton arrow label="Contour" icon={<Svg s={18} vb="0 0 18 18"><path d="M1 4h13v13H1z" fill="#eef6fc" stroke="#2a6ea6" strokeWidth="1.500" /><path d="M5 16l1-4L15 1l3 2L8 15z" fill="#edc56e" stroke="#7c5b2a" strokeWidth=".8" /></Svg>} />
            <SmallButton arrow label="Remplissage" icon={<Svg s={18} vb="0 0 18 18"><path d="M8 2l9 7-6 6-7-6z" fill="#e2ecf5" stroke="#6d8ba8" /><path d="M6 4C1 5 1 8 1 13l5-4z" fill="#4a8fce" /><path d="M0 13h18v5H0z" fill="#5aa0e4" /></Svg>} />
          </div>
        </Group>
        <Group label="" w="w-[62px]">
          <BigButton className="w-full" lines={["Taille"]} arrow icon={<Svg w={40} h={33} vb="0 0 40 33"><path d="M0 0h40v1H0zM0 4h40v3H0zM0 9h40v4H0zM0 16h40v5H0zM0 24h40v8H0z" fill="#1e395b" /></Svg>} />
        </Group>
        <Group label="Couleurs" w="w-[460px]">
          <BigButton className="ml-1 w-[50px] border border-[#62a2e4] bg-[#c9dff5]" lines={["Couleur", "1"]} icon={<span className="size-10 border-2 border-[#868686] bg-[#ed1c24] ring-1 ring-white ring-inset" />} />
          <BigButton className="w-[50px]" lines={["Couleur", "2"]} icon={<span className="size-[30px] border-2 border-[#868686] bg-white" />} />
          <div className="ml-0.5 grid grid-cols-10 content-start gap-0.5 pt-0.5">
            {PALETTE.flat().map((c, i) => (
              <button key={i} aria-label={"Couleur " + (i + 1)} className="size-[25px] border border-[#a0a0a0] p-px"><span className="block size-full" style={{ background: c }} /></button>
            ))}
          </div>
          <BigButton className="ml-0.5 w-[72px]" lines={["Modifier les", "couleurs"]} icon={<span className="size-[37px] border-2 border-[#b0b0b0] bg-[linear-gradient(transparent,#8888),linear-gradient(90deg,red,#ff0,#0f0,#0ff,#00f,#f0f,red)]" />} />
        </Group>
        <Group label="" w="w-[98px]">
          <BigButton className="w-full" lines={["Modifier avec", "Paint 3D"]} icon={<span className="grid size-[37px] place-items-center border border-[#bbb] bg-[#f7f7f7]"><Svg w={24} h={32} vb="0 0 24 32"><defs><linearGradient id="drop" x1="1" y1="0" x2="0" y2="1"><stop stopColor="#2fe0f0" /><stop offset=".45" stopColor="#8d6bea" /><stop offset=".75" stopColor="#e0448c" /><stop offset="1" stopColor="#f7b32b" /></linearGradient></defs><path d="M12 1c7 0 11 5 11 11 0 8-8 9-13 19 0-6-9-10-9-18C1 6 5 1 12 1z" fill="url(#drop)" /></Svg></span>} />
        </Group>
      </div>
    </>
  );
}

function Handle({ pos }) {
  return <span className={"absolute size-[5px] border border-[#444] bg-white " + pos} />;
}

function PaintCanvas() {
  return (
    <div className="flex min-h-0 flex-1">
      <div className="relative flex min-w-0 flex-1 flex-col overflow-hidden bg-[#c9d5e8] pl-[6px]">
        <div className="flex min-h-0 w-[calc(100%+24px)] flex-1 flex-col">
          <ConsoleBody id="auth-left" />
          <ConsoleStatus h="h-[10px]" />
        </div>
        <div className="-ml-[6px] h-[6px] shrink-0 bg-gradient-to-b from-[#a9b8d2] to-[#c9d5e8]" />
        <div className="absolute top-[110px] left-[69px] h-[26px] w-[144px] border-[4px] border-[#ed1c24]" />
        <div className="absolute top-[16px] left-[585px] h-[32px] w-[125px] border-[4px] border-[#ed1c24]" />
        <div className="absolute bottom-[14px] left-[257px] h-[63px] w-[124px] border-[4px] border-[#ed1c24]">
          <div className="absolute -inset-[3px] border border-dashed border-white outline outline-1 -outline-offset-1 outline-[#3b6fb0]/40" />
          <Handle pos="-top-1 -left-1" /><Handle pos="-top-1 left-1/2" /><Handle pos="-top-1 -right-1" />
          <Handle pos="top-1/2 -left-1" /><Handle pos="top-1/2 -right-1" />
          <Handle pos="-bottom-1 -left-1" /><Handle pos="-bottom-1 left-1/2" /><Handle pos="-right-1 -bottom-1" />
        </div>
        <Handle pos="bottom-0.5 left-[963px]" />
        <span className="absolute top-[578px] left-[1200px]">
          <Svg w={17} h={24} vb="0 0 17 24"><path d="M5 22v-4L1 13c-1-2 1-3 2-2l2 2V2c0-2 3-2 3 0v6l7 2c1 0 1 1 1 3 0 4-1 5-2 6v3z" fill="#fff" stroke="#111" strokeWidth="1.200" /><path d="M8 8v4M11 9v3M13.500 10v2" stroke="#111" /></Svg>
        </span>
      </div>
      <div className="flex w-5 shrink-0 flex-col items-center bg-[#f0f0f0]">
        <span className="py-1.5"><Chevron dir="up" s={12} color="#505050" /></span>
        <span className="mt-[131px] w-full flex-1 bg-[#cdcdcd]" />
        <span className="pt-1 pb-2"><Chevron s={12} color="#505050" /></span>
      </div>
    </div>
  );
}

function Frame({ dashed }) {
  return (
    <Svg s={20} vb="0 0 20 20"><path d="M4 2h13v14H4z" fill="#e8f2fa" stroke="#3e5c7a" strokeDasharray={dashed ? "2 1.500" : undefined} /><path d="M1 1v15M4 18.500h14M0 2.500L1 1l1 1.500M17 17.500l1.500 1-1.500 1" stroke="#3e5c7a" /></Svg>
  );
}

function PaintFooter() {
  const cell = "flex w-[200px] items-center gap-1 border-r border-[#d7d7d7] pl-1";
  return (
    <footer className="flex h-[32px] shrink-0 border-t border-[#d7d7d7] bg-[#f0f0f0] py-0.5 font-['Open_Sans',sans-serif] text-[14px] text-[#1e1e1e]">
      <div className={cell}><Svg s={18} vb="0 0 18 18"><path d="M9 1v16M1 9h16M7 3l2-2 2 2M7 15l2 2 2-2M3 7L1 9l2 2M15 7l2 2-2 2" stroke="#3e5c7a" strokeWidth="1.300" /></Svg></div>
      <div className={cell}><Frame dashed />120 × 58px</div>
      <div className={cell}><Frame />1920 × 974px</div>
      <div className={cell}><Svg s={20} vb="0 0 20 20"><path d="M2 1h16v17H4l-2-2z" fill="#c9dbe9" stroke="#3e5c7a" /><path d="M5 1h10v7H5z" fill="#fff" stroke="#3e5c7a" /><path d="M6 12h8v6H6z" fill="#fff" stroke="#3e5c7a" /><path d="M8 14v3" stroke="#222" /></Svg>Taille : 66,1 Ko</div>
      <div className="ml-auto flex items-center border-l border-[#d7d7d7] pr-[5px] pl-5">
        <label htmlFor="zoom" className="whitespace-nowrap">100 %</label>
        <button aria-label="Zoom arrière" className="ml-2 grid size-5 place-items-center rounded-full border border-[#888] bg-[#ececec]"><Svg s={12} vb="0 0 12 12"><path d="M1 6h10" stroke="#555" strokeWidth="2" /></Svg></button>
        <input id="zoom" type="range" defaultValue="50" className="mx-[14px] h-6 w-[105px] appearance-none bg-transparent [&::-webkit-slider-runnable-track]:h-1 [&::-webkit-slider-runnable-track]:border [&::-webkit-slider-runnable-track]:border-[#d6d6d6] [&::-webkit-slider-runnable-track]:bg-[#e7eaea] [&::-webkit-slider-thumb]:-mt-[10px] [&::-webkit-slider-thumb]:h-[23px] [&::-webkit-slider-thumb]:w-[13px] [&::-webkit-slider-thumb]:appearance-none [&::-webkit-slider-thumb]:bg-[#0078d7] [&::-webkit-slider-thumb]:[clip-path:polygon(0_0,100%_0,100%_75%,50%_100%,0_75%)]" />
        <button aria-label="Zoom avant" className="grid size-5 place-items-center rounded-full border border-[#888] bg-[#ececec]"><Svg s={12} vb="0 0 12 12"><path d="M1 6h10M6 1v10" stroke="#555" strokeWidth="2" /></Svg></button>
      </div>
    </footer>
  );
}

function LeftTaskbar() {
  return (
    <div className="flex h-10 shrink-0 items-center bg-[#1c1c1c] font-['Open_Sans',sans-serif] text-white">
      <button aria-label="Démarrer" className="grid w-[45px] place-items-center"><WinLogo /></button>
      <div className="flex h-full w-[323px] items-center border border-[#ababab] bg-[#f2f2f2] pl-[14px]">
        <Loupe s={20} />
        <input aria-label="Rechercher" placeholder="Rechercher" className="ml-[14px] w-0 flex-1 bg-transparent text-[18px] placeholder:text-[#3d3d3d]" />
        <Svg w={74} h={38} vb="0 0 74 38">
          <path d="M22 19c20-6 35-4 52-2v15H20z" fill="#35c4e8" /><path d="M0 38c4-12 20-18 34-14 12 2 26 4 40 5v9z" fill="#f0d6a4" /><path d="M0 38c2-10 10-17 18-18l4 2C14 26 10 32 8 38z" fill="#7dd6ea" />
          <path d="M11 8c2 8 2 16 0 20" stroke="#8a5a2b" strokeWidth="1.800" /><path d="M11 8C7 3 3 5 1 9c4-2 7-2 10-1zM11 8c4-5 8-3 9 2-3-2-6-3-9-2zM11 8c-3 1-5 4-5 8 1-3 3-6 5-8zM11 8c2 2 4 4 4 8 1-4 0-7-4-8z" fill="#3d9a3f" stroke="#3d9a3f" />
          <rect x="23" y="2" width="38" height="8" rx="4" fill="#14539a" /><path d="M42 2h15q4 4 0 8H46z" fill="#4cc4d8" />
          <path d="M25 12h37q3 3 3 9v11H22V21q0-8 3-9z" fill="#f4f4f4" /><path d="M22 22h43v10H22z" fill="#e0232a" /><path d="M27 14h11v6H25zM41 14h9v6h-9zM53 14h8l2 6H53z" fill="#5f7d8e" />
          <circle cx="31" cy="32" r="4" fill="#2c2c2c" /><circle cx="56" cy="32" r="4" fill="#2c2c2c" /><circle cx="31" cy="32" r="1.500" fill="#ddd" /><circle cx="56" cy="32" r="1.500" fill="#ddd" />
        </Svg>
      </div>
      <div className="ml-[3px] flex h-full">
        {HOST_APPS.map((n) => <TaskButton key={n} name={n} s={20} w="w-[46px]" bar="h-[3px] bg-[#76e4ee]" running={RUNNING.has(n)} active={n === "vmware"} />)}
      </div>
      <div className="ml-auto flex items-center pr-[31px]">
        <span className="mr-0.5 grid size-[27px] place-items-center rounded-full border-2 border-white bg-[#0a8bd6] text-[18px] leading-none font-bold">?</span>
        <span className="ml-4"><Svg s={18} vb="0 0 18 18"><path d="M2 12l7-7 7 7" stroke="#fff" strokeWidth="1.400" /></Svg></span>
        <span className="ml-3 flex items-center gap-3">
          <Svg s={18} vb="0 0 18 18"><rect x="2" y="5" width="9" height="8" rx="2" stroke="#fff" /><path d="M11 8l4-2v6l-4-2M4 2c2-1.500 5-1.500 7 0M4 16c2 1.500 5 1.500 7 0" stroke="#fff" /></Svg>
          <Svg s={20} vb="0 0 18 18"><path d="M4 14c-5 0-4-6 0-6 1-5 8-5 9 0 5 0 5 6 1 6z" fill="#e9e9e9" /></Svg>
          <Svg s={18} vb="0 0 18 18"><path d="M1 3l15-2v15L1 17z" stroke="#fff" /><path d="M5 8c1-4 5-4 6-1M11 11c-2 3-5 2-6 0" stroke="#fff" /><circle cx="13.500" cy="14" r="4" fill="#2f7fd4" /></Svg>
          <Svg s={18} vb="0 0 18 18"><path d="M2 17C2 9 8 2 16 2M6 17c0-6 4-10 10-10M10 17c0-3 3-5 6-5" stroke="#ddd" strokeWidth="1.300" /><circle cx="15" cy="16" r="1.500" fill="#fff" /></Svg>
          <Svg s={20} vb="0 0 20 20"><path d="M5 6h13v9H5z" stroke="#fff" strokeWidth="1.300" /><path d="M7 8h9v5H7z" fill="#fff" /><path d="M1 3v4h4V3M3 7v6" stroke="#fff" strokeWidth="1.300" /></Svg>
          <Svg s={20} vb="0 0 20 20"><path d="M1 7h3l4-4v14l-4-4H1zM11 7c1.500 2 1.500 4 0 6M13.500 5c3 3 3 7 0 10M16 3c4 4 4 10 0 14" stroke="#fff" strokeWidth="1.200" /></Svg>
        </span>
        <span className="mr-[22px] ml-3 text-[14px]">15:37</span>
        <Notice />
      </div>
    </div>
  );
}

function PaintDesktop() {
  return (
    <section className="flex min-h-screen w-1/2 flex-col bg-white pt-[109px]">
      <PaintTitle />
      <PaintRibbon />
      <PaintCanvas />
      <div className="flex h-[21px] shrink-0 items-center border-t border-white bg-[#f0f0f0]">
        <span className="flex w-[21px] justify-center"><Chevron dir="left" s={14} color="#505050" /></span>
        <span className="h-full flex-1 bg-[#cdcdcd]" />
        <span className="flex w-[73px] justify-center pl-2"><Chevron dir="right" s={14} color="#505050" /></span>
      </div>
      <PaintFooter />
      <LeftTaskbar />
    </section>
  );
}

/* ---------- vmware ---------- */

const Sep = () => <span className="block h-[18px] w-px shrink-0 bg-[#c4c4c4]" />;

function VmTool({ w = "w-[30px]", label, children }) {
  return (
    <button aria-label={label} className={"grid shrink-0 place-items-center " + w}>
      <Svg s={18} vb="0 0 18 18">{children}</Svg>
    </button>
  );
}

function VmMenu() {
  const c = "#444";
  const clock = <><circle cx="9" cy="8" r="6.500" stroke={c} /><path d="M9 4v4.500h3" stroke={c} /></>;
  return (
    <div className="flex h-[33px] shrink-0 items-center font-['Open_Sans',sans-serif] text-[11px]">
      <nav className="flex w-[233px] shrink-0 pl-1">
        {["File", "Edit", "View", "VM", "Tabs", "Help"].map((m) => <button key={m} className="px-2">{m}</button>)}
      </nav>
      <Sep />
      <VmTool w="w-[38px]" label="Pause"><path d="M2.500 1h5v16h-5zM11 1h5v16h-5z" fill="#f26a21" /></VmTool>
      <span className="mr-3"><Caret color="#777" /></span>
      <Sep />
      <VmTool w="w-[42px]" label="Ctrl Alt Del"><path d="M5 1h8v6H5zM1.500 7h12v5h-12zM4 12v3M13 12v5M10.500 14.500L13 17l2.500-2.500" stroke={c} strokeWidth="1.200" /></VmTool>
      <Sep />
      <span className="flex px-[6px]">
        <VmTool label="Instantané">{clock}<path d="M1 14h7M4.500 10.500v7" stroke="#f26a21" strokeWidth="1.600" /></VmTool>
        <VmTool label="Revenir">{clock}<path d="M1 14l5-4v2.500h10v3H6V18z" fill="#f26a21" /></VmTool>
        <VmTool label="Gérer">{clock}<path d="M1 11l3 2h9l3-2v7l-3-2H4l-3 2z" fill="#1e90dd" /></VmTool>
      </span>
      <Sep />
      <span className="flex px-[6px]">
        <VmTool label="Bibliothèque"><path d="M1.500 1.500h15v15h-15zM5 2v14M7.500 2v14" stroke={c} strokeWidth="1.200" /></VmTool>
        <VmTool label="Miniatures"><path d="M1.500 1.500h15v15h-15zM2 11.500h14" stroke={c} strokeWidth="1.200" /></VmTool>
        <VmTool label="Plein écran"><path d="M5 5h8v8H5zM1 5V1h4M13 1h4v4M17 13v4h-4M5 17H1v-4" stroke={c} strokeWidth="1.200" /></VmTool>
        <VmTool label="Unity"><path d="M6 6V1.500h11V11h-4M1.500 6H12v10H1.500z" stroke={c} strokeWidth="1.200" /></VmTool>
      </span>
      <Sep />
      <span className="flex w-[42px] justify-center"><span className="grid h-[26px] w-[26px] place-items-center rounded border border-[#ccc] bg-[#eee]"><VmTool w="w-[24px]" label="Console"><path d="M.5.5h17v17H.5zM4 5l4 4-4 4M9.500 13.500H14" stroke="#333" strokeWidth="1.200" /></VmTool></span></span>
      <Sep />
      <VmTool w="w-[42px]" label="Agrandir"><path d="M1 1h16v16H1zM5 13l8-8M9 4.500h4.500V9M4.500 9v4.500H9" stroke={c} strokeWidth="1.200" /></VmTool>
      <Caret color="#777" />
    </div>
  );
}

function VmTab({ w, icon, children, active }) {
  return (
    <div className={"mr-[5px] flex h-[27px] items-center rounded-t-sm border border-b-0 px-1.5 whitespace-nowrap " + w + (active ? " border-white bg-white font-bold" : " border-[#a9abad] bg-[#e9eaec]")}>
      <button role="tab" aria-selected={!!active} className="flex items-center gap-1">
        <Svg s={15}>
          {icon === "home" ? <path d="M1 8l7-6.500L15 8M3.500 7v8H6v-4h4v4h2.500V7" stroke="#777" /> : <path d="M1 12V1h9M4 4h10v11H4z" stroke="#777" />}
          {icon === "play" && <path d="M7 6l7 4.500L7 15z" fill="#3e9b12" />}
        </Svg>
        {children}
      </button>
      <button aria-label="Fermer l'onglet" className="ml-auto"><Svg s={9} vb="0 0 10 10"><path d="M1 1l8 8M9 1L1 9" stroke="#aaa" strokeWidth="1.300" /></Svg></button>
    </div>
  );
}

function GuestToolbar() {
  const win = (d) => <><path d="M.5 2.500h15v12H.5z" fill="#fff" stroke="#7d8792" /><path d="M.5 2.500h15v2.500H.5z" fill="#b8c4cf" /><path d="M6 5v9M2 7h2.500M2 9.500h2.500M2 12h2.500" stroke="#7d8792" /><path d={d} fill="#3aa22b" /></>;
  return (
    <div className="flex h-[23px] shrink-0 items-center border-b border-[#dcdcdc] pl-[5px]">
      <button aria-label="Précédent"><Svg s={17}><path d="M1 8l7-6v3.500h7v5H8V14z" fill="#2ea3e6" stroke="#1670b0" strokeWidth=".8" /></Svg></button>
      <button aria-label="Suivant" className="ml-1.5"><Svg s={17}><path d="M15 8L8 2v3.500H1v5h7V14z" fill="#8b8b8b" stroke="#666" strokeWidth=".8" /></Svg></button>
      <span className="mr-2 ml-1.5"><Sep /></span>
      <button aria-label="Dossier parent"><Svg s={16}><path d="M1 4h6l1-2h6v13H1z" fill="#edc75e" stroke="#b98e2e" strokeWidth=".7" /><path d="M3 12c0-4 2-6 5-7V3l4 3-4 3V7c-2 1-3 2-5 5z" fill="#3fae35" /></Svg></button>
      <button aria-label="Arborescence" className="ml-1 grid h-5 w-[23px] place-items-center border border-[#99d1ff] bg-[#cce8ff]"><Svg s={16}>{win("M13 7v5L9 9.500z")}</Svg></button>
      <span className="mr-2 ml-0.5"><Sep /></span>
      <button aria-label="Actualiser"><Svg s={16}><path d="M3 1h8l3 3v11H3z" fill="#fff" stroke="#8a949e" /><path d="M11 6.500C7.500 5 5 8 6.500 10.500M6.500 11.500c3 1.500 5.500-1 4.500-4" stroke="#35a32d" strokeWidth="1.500" /></Svg></button>
      <span className="mx-1.5"><Sep /></span>
      <button aria-label="Aide" className="ml-0.5 grid h-4 w-3.5 place-items-center bg-[#2c4fb8] font-['Liberation_Sans',sans-serif] text-[12px] leading-none font-bold text-white">?</button>
      <button aria-label="Volet" className="ml-2"><Svg s={16}>{win("M9 7v5l4-2.500z")}</Svg></button>
    </div>
  );
}

const FOUND = ["A", "B", "C", "D", "E", "F", "G"];

function NamesDialog() {
  const th = "border-r border-[#e5e5e5] pl-[6px] font-normal whitespace-nowrap";
  return (
    <div role="dialog" aria-label="Noms multiples trouvés" className="absolute top-[360px] left-[675px] flex h-[351px] w-[571px] flex-col border border-[#6b6b6b] bg-[#f0f0f0] font-['Liberation_Sans',sans-serif] text-[11px] text-black">
      <div className="flex h-[31px] shrink-0 items-center justify-between bg-white pr-2.5 pl-2 font-['Open_Sans',sans-serif]">
        <h2>Noms multiples trouvés</h2>
        <button aria-label="Fermer"><Svg s={11} vb="0 0 12 12"><path d="M.5.5l11 11M11.500.5l-11 11" stroke="#222" /></Svg></button>
      </div>
      <p className="w-[400px] pt-2.5 pl-[11px] leading-[13px]">Plusieurs objets correspondent au nom d'objet suivant : "cat". Sélectionnez un<br />nom dans la liste ou cliquez sur Annuler pour entrer un nouveau nom.</p>
      <p className="mt-[23px] ml-[29px] h-[18px] leading-4">Noms correspondants :</p>
      <div className="mr-[9px] ml-[29px] h-[195px] border border-[#828790] bg-white">
        <table className="w-[511px] table-fixed border-collapse text-left">
          <colgroup><col className="w-[102px]" /><col className="w-[102px]" /><col className="w-[102px]" /><col className="w-[102px]" /><col className="w-[103px]" /></colgroup>
          <thead>
            <tr className="h-[26px]">
              <th className={th}>Nom</th><th className={th}>Nom d'ouverture ...</th><th className={th}>Adresse de mess...</th><th className={th}>Description</th><th className={th}>Dossier</th>
            </tr>
          </thead>
          <tbody>
            {FOUND.map((l) => {
              const on = l === "D";
              return (
                <tr key={l} className={"h-[17px] whitespace-nowrap " + (on ? "bg-[#0078d7] text-white" : "")}>
                  <td className="p-0"><span className="flex items-center bg-white pl-[5px]"><Users dim={on} /><span className={"flex-1 pl-px leading-[17px] " + (on ? "bg-[#0078d7]" : "")}>Catégorie {l}</span></span></td>
                  <td className="p-0 pl-[6px]">Catégorie {l}</td><td /><td />
                  <td className="p-0 pl-[6px]">Credit-industriel.i...</td>
                </tr>
              );
            })}
          </tbody>
        </table>
      </div>
      <div className="mt-3 mr-2.5 flex justify-end gap-[7px]">
        <PushButton primary w="w-[73px]">OK</PushButton>
        <PushButton w="w-[73px]">Annuler</PushButton>
      </div>
    </div>
  );
}

function GuestTaskbar() {
  const pinned = ["explorer", "edge", "cmd", "chrome", "git", "window", "server", "gold", "policy", "capture"];
  return (
    <div className="flex h-10 shrink-0 items-center bg-gradient-to-r from-[#001820] to-[#000318] font-['Open_Sans',sans-serif] text-white">
      <button aria-label="Démarrer" className="grid w-[49px] place-items-center"><WinLogo s={17} /></button>
      <div className="flex h-full w-[343px] items-center border border-[#ababab] bg-[#f2f2f2] pl-[10px]">
        <Loupe s={17} />
        <input aria-label="Recherche" placeholder="Tapez ici pour effectuer une recherche" className="ml-3 w-0 flex-1 bg-transparent text-[14px] placeholder:text-[#3d3d3d]" />
      </div>
      <button aria-label="Applications actives" className="grid w-[52px] place-items-center"><Svg s={16}><path d="M1 4.500h9v7H1zM1 1v1.500h9V1M1 15v-1.500h9V15M13.500 1v3M13.500 7v8M12.500 5.500h2" stroke="#fff" strokeWidth="1.200" /></Svg></button>
      <div className="flex h-full">
        {pinned.map((n, i) => (
          <button key={n} aria-label={n} className={"relative grid h-full w-[49px] shrink-0 place-items-center " + (n === "policy" ? "bg-[#36454f]" : "")}>
            <AppIcon name={n} s={24} />
            {i > 4 && <span className="absolute inset-x-1 bottom-0 h-0.5 bg-[#76b9ed]" />}
          </button>
        ))}
      </div>
      <div className="ml-auto flex h-full items-center">
        <Svg s={16}><path d="M2 11l6-6 6 6" stroke="#fff" strokeWidth="1.400" /></Svg>
        <Svg s={18} vb="0 0 18 18" className="ml-2"><path d="M1 6h3l4-4v13l-4-4H1z" stroke="#fff" /><circle cx="12.500" cy="12.500" r="4.500" fill="#d9222a" /><path d="M10.500 10.500l4 4M14.500 10.500l-4 4" stroke="#fff" strokeWidth="1.200" /></Svg>
        <Svg s={17} vb="0 0 18 18" className="ml-1.5"><path d="M1 2h4v4H1zM5 4h12v8H3V6M10 12v3M6 15.500h8" stroke="#fff" /></Svg>
        <Svg s={17} vb="0 0 18 18" className="ml-1.5"><path d="M1 3l15-2v15L1 17z" stroke="#fff" /><path d="M5 8c1-4 5-4 6-1M11 11c-2 3-5 2-6 0" stroke="#fff" /><circle cx="13" cy="13" r="4.500" fill="#ff9a1a" /></Svg>
        <span className="mx-2 flex w-[62px] flex-col items-center text-[11px] leading-[18px]"><span>15:37</span><span>17/06/2023</span></span>
        <span className="mr-4 ml-2.5"><Notice badge /></span>
        <span className="mr-1 h-full w-px bg-[#8a8f98]" />
      </div>
    </div>
  );
}

function VmStatus() {
  const dots = [true, false, true, true, false, true, false, false];
  const paths = ["M3 2h10l2 7v6H1V9zM1 10h14", "M8 1a7 7 0 1 0 .01 0zM8 7a1 1 0 1 0 .01 0", "M2 2h7v6H2zM7 6h7v6H7z", "M2 2h7v6H2zM7 6h7v6H7z", "M4 6V1h8v5M1 6h14v6H1zM4 10h8v5H4z", "M1 6h3l3-4v12l-3-4H1zM10 5c2 2 2 4 0 6", "M8 1a7 7 0 1 0 .01 0zM8 5a3 3 0 1 0 .01 0", "M8 1a6 7 0 1 0 .01 0zM5.500 5.500l5 5L8 13V3l2.500 2.500-5 5"];
  return (
    <div className="flex h-[21px] shrink-0 items-center border-t-2 border-[#606468] bg-[#e3e5e7] font-['Open_Sans',sans-serif] text-[11px] whitespace-nowrap text-black">
      To direct input to this VM, move the mouse pointer inside or press Ctrl+G.
      <div className="ml-auto flex items-center gap-[5px] pr-[26px]">
        {paths.map((d, i) => (
          <Svg key={i} s={16}><path d={d} stroke={dots[i] ? "#777" : "#aaa"} />{dots[i] && <circle cx="12.500" cy="12.500" r="3" fill="#6cc51d" />}</Svg>
        ))}
        <span className="ml-1"><Sep /></span>
        <Svg s={15} className="ml-1"><path d="M1 1h14v10l-4 4H1z" fill="#3ce0c8" stroke="#555" /><path d="M15 11h-4v4" stroke="#555" /></Svg>
      </div>
    </div>
  );
}

function VmDesktop() {
  return (
    <section className="flex min-h-screen w-1/2 flex-col bg-white pb-[109px]">
      <div className="relative flex min-h-0 flex-1 flex-col">
        <div className="flex min-h-0 flex-1 flex-col border-l border-[#333]">
          <header className="flex h-6 shrink-0 items-center border-b border-[#dedede] pl-1 font-['Open_Sans',sans-serif] text-[11px] text-black">
            <AppIcon name="vmware" s={17} />
            <h1 className="ml-[15px]">Windows Server 2022 - VMware Workstation</h1>
            <div className="ml-auto"><WinButtons color="#111" cell="w-6" s={9} /></div>
          </header>
          <VmMenu />
          <div role="tablist" className="flex h-[33px] shrink-0 items-end border-t border-[#5c6060] bg-[#e3e5e7] pl-1 font-['Open_Sans',sans-serif] text-[11px] text-black">
            <VmTab w="w-[83px]" icon="home">Home</VmTab>
            <VmTab w="w-[199px]" icon="vm">Windows Server 2022 ss inter…</VmTab>
            <VmTab w="w-[199px]" icon="vm">Windows Server 2022 bureau</VmTab>
            <VmTab w="w-[172px]" icon="play" active>Windows Server 2022</VmTab>
          </div>
          <div className="flex h-[23px] shrink-0 items-center pl-[3px] font-['Open_Sans',sans-serif] text-[11px] text-[#999]">
            <TreeIcon kind="root" /><span>Gestion de stratégie de groupe</span>
            <div className="mr-1 ml-auto"><WinButtons color="#888" cell="w-[45px]" s={10} /></div>
          </div>
          <div className="flex h-[23px] shrink-0 items-center border-b border-[#b4b4b4] pl-[3px] font-['Open_Sans',sans-serif] text-[11px] text-black">
            <TreeIcon kind="root" />
            <nav className="-ml-1 flex">{["Fichier", "Action", "Affichage", "Fenêtre", "?"].map((m) => <button key={m} className="px-2">{m}</button>)}</nav>
            <div className="ml-auto flex h-full items-center gap-px border-l border-[#aaa] pl-px">
              <button aria-label="Réduire la fenêtre" className="grid h-[18px] w-[18px] place-items-center border border-[#ddd]"><Svg s={10} vb="0 0 10 10"><path d="M2 8h5" stroke="#6b7885" strokeWidth="2" /></Svg></button>
              <button aria-label="Restaurer la fenêtre" className="grid h-[18px] w-[18px] place-items-center border border-[#ddd]"><Svg s={10} vb="0 0 10 10"><path d="M1.500 5h5v4h-5zM4 4V1.500h5v4H7.500" stroke="#6b7885" strokeWidth="1.500" /></Svg></button>
              <button aria-label="Fermer la fenêtre" className="grid h-[18px] w-[18px] place-items-center bg-[#e2e2e2]"><Svg s={10} vb="0 0 10 10"><path d="M2 1.500l6 7M8 1.500l-6 7" stroke="#8f9ca8" strokeWidth="2" /></Svg></button>
            </div>
          </div>
          <GuestToolbar />
          <div className="h-[6px] shrink-0 bg-[#f0f0f0]" />
          <ConsoleBody id="auth-right" />
          <ConsoleStatus h="h-[24px]" />
          <GuestTaskbar />
          <VmStatus />
        </div>
        <NamesDialog />
      </div>
      <div className="flex h-[30px] shrink-0 items-center bg-[#1c1c1c] font-['Open_Sans',sans-serif] text-white">
        <button aria-label="Démarrer" className="grid w-[35px] place-items-center"><WinLogo s={16} /></button>
        <button aria-label="Rechercher" className="grid w-[39px] place-items-center"><Loupe s={16} color="#fff" /></button>
        <div className="flex h-full">
          {HOST_APPS.map((n) => <TaskButton key={n} name={n} s={16} w="w-[37px]" bar="h-0.5 bg-[#76e4ee]" running={RUNNING.has(n)} active={n === "vmware"} />)}
        </div>
        <span className="mr-1.5 ml-auto text-[11px]">15:37</span>
      </div>
    </section>
  );
}

export default function App() {
  return (
    <main className="flex min-h-screen w-full bg-white">
      <PaintDesktop />
      <VmDesktop />
    </main>
  );
}
